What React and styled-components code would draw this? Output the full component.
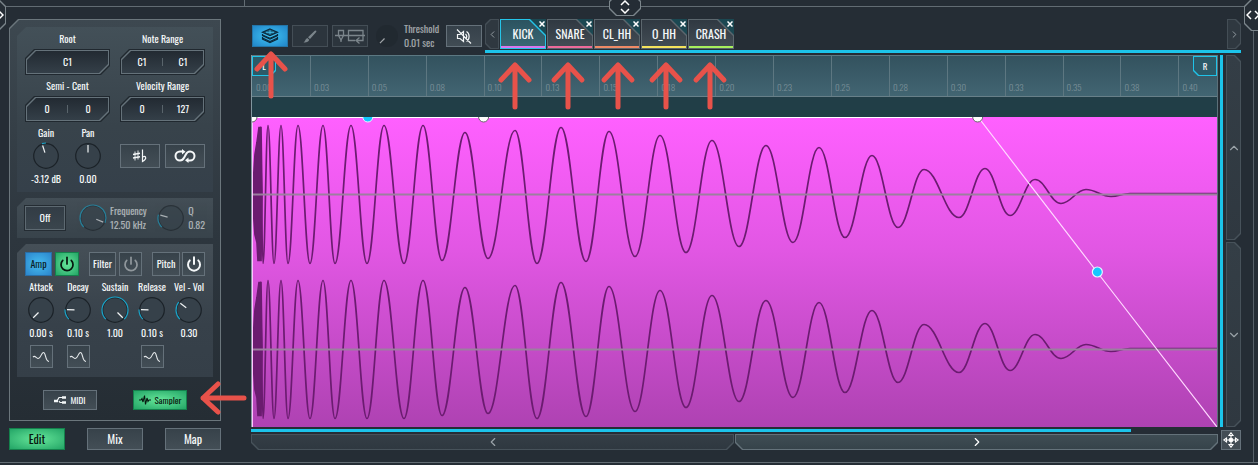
import React, { useState } from "react";
import styled, { createGlobalStyle, css } from "styled-components";
import { Power, ChevronLeft, ChevronRight, ChevronUp, ChevronDown } from "lucide-react";

const GlobalStyle = createGlobalStyle`
  * {
    box-sizing: border-box;
  }

  body {
    margin: 0;
    background: #252d35;
    color: #f4f7f8;
    font-family: Oswald, "Liberation Sans Narrow", "Roboto Condensed", "Open Sans Condensed", "Liberation Sans", sans-serif;
    font-size: 10px;
    font-weight: 400;
    line-height: 14px;
  }

  button, input {
    font: inherit;
    color: inherit;
    margin: 0;
    padding: 0;
    border: 0;
    background: none;
  }

  svg {
    display: block;
    flex: none;
  }
`;

// corner sizes: top-left, top-right, bottom-right, bottom-left
const cut = ([tl, tr, br, bl]) => `polygon(
  ${tl}px 0, calc(100% - ${tr}px) 0, 100% ${tr}px,
  100% calc(100% - ${br}px), calc(100% - ${br}px) 100%,
  ${bl}px 100%, 0 calc(100% - ${bl}px), 0 ${tl}px
)`;

const chamfer = (corners, line, fill) => css`
  position: relative;
  isolation: isolate;
  background: ${line};
  clip-path: ${cut(corners)};

  &::before {
    content: "";
    position: absolute;
    inset: 1px;
    z-index: -1;
    background: ${fill};
    clip-path: ${cut(corners)};
  }
`;

/* ---------- page frame ---------- */

const Page = styled.div`
  position: relative;
  min-height: 100vh;
  display: flex;
  flex-direction: column;
  overflow: hidden;
`;

const TopEdge = styled.div`
  height: 7px;
  padding-left: 244px;
  border-bottom: 1px solid #626c73;

  &::before {
    content: "";
    display: block;
    width: 1px;
    height: 6px;
    background: #626c73;
  }
`;

const BottomEdge = styled.div`
  height: 3px;
  border-top: 1px solid #626c73;
`;

const Workspace = styled.div`
  flex: 1;
  display: flex;
  gap: 30px;
  padding: 12px 17px 12px 9px;
`;

const RightEdge = styled.div`
  position: absolute;
  right: 4px;
  top: 30px;
  bottom: 3px;
  width: 1px;
  background: #566068;
`;

const Handle = styled.button`
  ${(p) => chamfer(p.$corners, "#7b858b", "#252d35")}
  position: absolute;
  display: grid;
  place-items: center;
  width: ${(p) => p.$w}px;
  height: ${(p) => p.$h}px;
  ${(p) => p.$place}
`;

/* ---------- side panel ---------- */

const Side = styled.aside`
  flex: none;
  width: 212px;
  display: flex;
  flex-direction: column;
  gap: 7px;
`;

const Panel = styled.div`
  ${chamfer([9, 0, 0, 0], "#6b767c", "linear-gradient(#3d4850, #2d363e 55%, #252d34)")}
  flex: 1;
  display: flex;
  flex-direction: column;
  gap: 6px;
  padding: 8px;
`;

const Group = styled.section`
  display: flex;
  flex-direction: column;
  padding: ${(p) => p.$pad};
  background: ${(p) => p.$bg};
  clip-path: ${cut([9, 0, 0, 0])};
`;

const TwoCols = styled.div`
  display: grid;
  grid-template-columns: 85px 85px;
  column-gap: 10px;
  row-gap: 4px;
`;

const FieldSet = styled.div`
  display: flex;
  flex-direction: column;
  align-items: center;
  gap: 3px;
`;

const FieldBox = styled.div`
  ${chamfer([9, 0, 9, 0], "#20282f", "#65727a")}
  width: 100%;
  height: 26px;
  display: flex;
  align-items: center;
  padding: 0 2px;

  &::after {
    content: "";
    position: absolute;
    inset: 2px;
    z-index: -1;
    background: linear-gradient(#222a32, #343f48);
    clip-path: ${cut([9, 0, 9, 0])};
  }
`;

const FieldInput = styled.input`
  flex: 1;
  min-width: 0;
  text-align: center;
`;

const Divider = styled.span`
  width: 1px;
  height: 8px;
  background: #59646b;
`;

const Row = styled.div`
  display: flex;
  align-items: center;
  justify-content: ${(p) => p.$justify || "flex-start"};
  gap: ${(p) => p.$gap || 0}px;
  padding: 0 ${(p) => p.$inset || 0}px;
`;

const KnobWrap = styled.label`
  position: relative;
  display: flex;
  flex-direction: column;
  align-items: center;
  gap: 1px;
  width: ${(p) => p.$w}px;
  white-space: nowrap;
`;

const KnobInput = styled.input`
  position: absolute;
  inset: 0;
  width: 100%;
  height: 100%;
  opacity: 0;
  cursor: pointer;
`;

const SideKnob = styled.label`
  position: relative;
  display: flex;
  align-items: center;
  gap: 2px;
  opacity: 0.6;
  white-space: nowrap;
`;

const Lines = styled.span`
  display: flex;
  flex-direction: column;
`;

const tones = {
  plain: css`
    background: linear-gradient(#37424a, #434e56);
    border-color: #65717a;
  `,
  sunk: css`
    background: linear-gradient(#323c45, #3a454d);
    border-color: #5d6971;
    box-shadow: 0 0 0 1px #242c33;
  `,
  blue: css`
    background: radial-gradient(#45bdf0, #2c86cc);
    border-color: #2a6ea6;
    color: #0b1c28;
  `,
  green: css`
    background: radial-gradient(#66e69a, #23a566);
    border-color: #14814c;
    color: #07170f;
  `,
};

const Button = styled.button`
  display: flex;
  align-items: center;
  justify-content: center;
  gap: 4px;
  width: ${(p) => p.$w}px;
  height: ${(p) => p.$h || 24}px;
  border: 1px solid;
  cursor: pointer;
  font-size: ${(p) => p.$size || 10}px;
  ${(p) => tones[p.$tone || "plain"]}

  svg {
    opacity: ${(p) => (p.$dim ? 0.45 : 1)};
  }
`;

const Envelope = styled.div`
  display: grid;
  grid-template-columns: repeat(5, 37px);
  justify-content: center;
  justify-items: center;
  row-gap: 5px;
  padding-top: 4px;
`;

const ModeRow = styled.div`
  display: flex;
  justify-content: space-between;
  padding: 7px 26px 0;
`;

/* ---------- editor ---------- */

const Main = styled.main`
  flex: 1;
  min-width: 0;
  display: flex;
  flex-direction: column;
  gap: 2px;
`;

const Toolbar = styled.div`
  display: flex;
  align-items: flex-start;
`;

const Tools = styled.div`
  display: flex;
  align-items: center;
  gap: 4px;
  width: 234px;
  padding: 2px 3px 0 1px;

  & > :last-child {
    margin-left: auto;
  }
`;

const ToolButton = styled.button`
  flex: none;
  display: grid;
  place-items: center;
  width: 36px;
  height: 22px;
  border: 1px solid ${(p) => (p.$state === "on" ? "#2476a8" : p.$state === "off" ? "#444e56" : "#65717a")};
  background: ${(p) =>
    p.$state === "on"
      ? "radial-gradient(#40c4f4, #2185c8)"
      : p.$state === "off"
      ? "#2c353d"
      : "linear-gradient(#36414a, #414c54)"};
  color: ${(p) => (p.$state === "on" ? "#0c2a3c" : p.$state === "off" ? "#7b858b" : "#f2f5f6")};
  cursor: pointer;
`;

const Spacer = styled.span`
  flex: 1;
`;

const TabArea = styled.div`
  flex: 1;
  min-width: 0;
  display: flex;
  flex-direction: column;
  gap: 1px;
`;

const TabRow = styled.div`
  display: flex;
  gap: 1px;
`;

const TabScroll = styled.button`
  ${(p) => chamfer(p.$corners, "#444e56", "#2f3840")}
  display: grid;
  place-items: center;
  width: 14px;
  height: 30px;
  color: #9aa3a8;
`;

const Tab = styled.div`
  position: relative;
  width: 46px;
  height: 30px;
  background: #1b4852;
`;

const TabBody = styled.button`
  ${(p) =>
    p.$active
      ? chamfer([0, 16, 0, 0], "#25c4e8", "linear-gradient(#2b5360, #3b6875)")
      : chamfer([0, 16, 0, 0], "#5c676e", "linear-gradient(#303942, #434d55)")}
  width: 100%;
  height: 100%;
  font-size: 12px;
  cursor: pointer;

  &::after {
    content: "";
    position: absolute;
    left: 1px;
    right: 1px;
    bottom: 1px;
    height: 2px;
    background: ${(p) => p.$color};
  }
`;

const TabClose = styled.button`
  position: absolute;
  top: 0;
  right: 0;
  width: 9px;
  height: 9px;
  display: grid;
  place-items: center;
`;

const CyanLine = styled.div`
  height: 3px;
  width: ${(p) => p.$w || "100%"};
  background: #1cc4ea;
`;

const EditorRow = styled.div`
  flex: 1;
  display: flex;
`;

const Editor = styled.div`
  flex: 1;
  min-width: 0;
  display: flex;
  flex-direction: column;
  border-left: 1px solid #82969e;
  border-right: 1px solid #5c7079;
`;

const Ruler = styled.div`
  position: relative;
  display: grid;
  grid-template-columns: repeat(16, 3fr) 2fr;
  height: 42px;
  border-top: 1px solid #5c7882;
  border-bottom: 1px solid #688089;
  background: linear-gradient(#33525e, #426572);
`;

const Tick = styled.div`
  display: flex;
  align-items: flex-end;
  padding: 0 0 2px 3px;
  font-size: 9px;
  font-weight: 300;
  color: #7b9099;
  border-left: 1px solid #5d7781;

  &:first-child {
    border-left-color: transparent;
  }
`;

const Marker = styled.button`
  ${(p) => chamfer(p.$corners, "#1fc3e8", "#2c5a68")}
  position: absolute;
  top: 0;
  ${(p) => p.$side}: 0;
  width: 24px;
  height: 20px;
  font-size: 9px;
`;

const Lane = styled.div`
  height: 20px;
  background: #213e47;
`;

const WaveBox = styled.div`
  flex: 1;
  position: relative;
  overflow: hidden;
  background: linear-gradient(#ff60ff, #e257e4 42%, #ae42b2);
`;

const WaveSvg = styled.svg`
  position: absolute;
  inset: 0;
  width: 100%;
  height: 100%;
  overflow: visible;
`;

const ScrollColumn = styled.div`
  display: flex;
  flex-direction: column;
  gap: 2px;
  width: 15px;
`;

const ScrollButton = styled.button`
  ${(p) =>
    p.$bright
      ? chamfer(p.$corners, "#64727a", "linear-gradient(#3f4d54, #36434a)")
      : chamfer(p.$corners, "#47525a", "linear-gradient(#343e46, #2f3840)")}
  flex: 1;
  display: grid;
  place-items: center;
  color: ${(p) => (p.$bright ? "#fff" : "#9aa3a8")};
`;

const ZoomBar = styled.div`
  width: 3px;
  margin: 0 3px 0 2px;
  background: #1cc4ea;
`;

const BottomRow = styled.div`
  display: flex;
  align-items: flex-end;
  gap: 3px;
`;

const HScroll = styled.div`
  flex: 1;
  display: flex;
  flex-direction: column;
  gap: 2px;
`;

const HScrollTrack = styled.div`
  display: flex;
  gap: 1px;
  height: 16px;
`;

const MoveButton = styled.button`
  display: grid;
  place-items: center;
  width: 20px;
  height: 20px;
  border: 1px solid #65717a;
  background: #434d55;
`;

const Notes = styled.svg`
  position: absolute;
  left: 0;
  top: 0;
  width: 100%;
  height: 100%;
  pointer-events: none;
`;

/* ---------- small drawings ---------- */

const point = (deg, r) => {
  const a = (deg * Math.PI) / 180;
  return [15 + r * Math.sin(a), 15 - r * Math.cos(a)];
};

const Dial = ({ angle, from = -135, flat }) => {
  const [x1, y1] = point(angle, 3.5);
  const [x2, y2] = point(angle, flat ? 10 : 11);
  const [lo, hi] = from < angle ? [from, angle] : [angle, from];
  const [sx, sy] = point(lo, 13);
  const [ex, ey] = point(hi, 13);
  return (
    <svg width="30" height="30" viewBox="0 0 30 30" aria-hidden="true">
      <circle cx="15" cy="15" r={flat ? 11 : 12.3} fill={flat ? "#20272e" : "#36414a"} stroke={flat ? "none" : "#1b2228"} strokeWidth="1.2" />
      {hi > lo && (
        <path d={`M${sx} ${sy}A13 13 0 ${hi - lo > 180 ? 1 : 0} 1 ${ex} ${ey}`} fill="none" stroke="#1aa3c8" strokeWidth="1.2" />
      )}
      <path d={`M${x1} ${y1}L${x2} ${y2}`} stroke="#f2f5f6" strokeWidth="1.2" />
    </svg>
  );
};

const CurveIcon = () => (
  <svg width="18" height="12" viewBox="0 0 18 12" fill="none" stroke="#e6eaec" strokeWidth="1.1">
    <path d="M1 6C3 4 4 7 6 7.500C9 8 9 1.500 11.500 1.500C14 1.500 13 10.500 17 10.500" />
  </svg>
);

const SharpFlatIcon = () => (
  <svg width="16" height="14" viewBox="0 0 16 14" fill="none" stroke="currentColor">
    <path d="M3 2.500V11.500M6 1.500V10.500" strokeWidth="0.9" />
    <path d="M1 5.500L8 4.300M1 9L8 7.800" strokeWidth="1.4" />
    <path d="M10.500 0.500V12.500C12.500 11.300 14.500 9.500 13.500 8C12.500 6.800 11 7.700 10.500 8.600" strokeWidth="1.2" />
  </svg>
);

const LoopIcon = () => (
  <svg width="22" height="14" viewBox="0 0 22 14" fill="none" stroke="currentColor" strokeWidth="2">
    <path d="M9 2.500H6A4.500 4.500 0 0 0 6 11.500C9.500 11.500 9.500 9.500 11 7S12.500 2.500 16 2.500A4.500 4.500 0 0 1 16 11.500H14" />
    <path d="M8 0L11.500 2.800L8 5.500ZM14.500 8.500V14L11 11.300Z" fill="currentColor" stroke="none" />
  </svg>
);

const MidiIcon = () => (
  <svg width="12" height="8" viewBox="0 0 12 8" fill="none" stroke="currentColor">
    <path d="M0 5H4M8 1.500H12M8 6.500H12" strokeWidth="2.4" />
    <path d="M3 5L5 1.500H9M5 5L6 6.500H9" strokeWidth="1.2" />
  </svg>
);

const SamplerIcon = () => (
  <svg width="12" height="10" viewBox="0 0 12 10" fill="none" stroke="currentColor" strokeWidth="1.1">
    <path d="M0 5H2L3 3.500L4 7L5.500 0.500L6.500 9.500L8 3L9 6.500L10 5H12" />
  </svg>
);

const LayersIcon = () => (
  <svg width="18" height="16" viewBox="0 0 18 16" fill="none" stroke="currentColor" strokeWidth="1.2">
    <path d="M9 1L16.500 4.300L9 7.600L1.500 4.300Z" fill="#1a5f80" />
    <path d="M9 2.300V6.300M5 4.300H13" stroke="#45c4ee" strokeWidth="0.9" />
    <path d="M1.500 6V7.600L9 11L16.500 7.600V6M1.500 9V11L9 14.600L16.500 11V9" />
    <path d="M1.500 7L9 10.200L16.500 7M1.500 10L9 13.500L16.500 10" />
  </svg>
);

const BrushIcon = () => (
  <svg width="14" height="13" viewBox="0 0 14 13" fill="currentColor">
    <path d="M12.500 0.500C13.500 0.500 13.700 1.300 13 2.200L7 9L5 7.200L11.500 1ZM4.300 8L6.200 9.800C5.800 12 3 12.800 0.500 12.400C2.400 11.500 2 9 4.300 8Z" />
  </svg>
);

const RouteIcon = () => (
  <svg width="30" height="15" viewBox="0 0 30 15" fill="none" stroke="currentColor" strokeWidth="1.3">
    <path d="M0 6.500H30M3.500 1.500H8.500V6.500L6 11L3.500 6.500ZM20 11.500H13.500V1.500H28V11.500H22M24.500 8.500L21 11.500L24.500 14.500" />
    <path d="M6 10V13" />
  </svg>
);

const MutedIcon = () => (
  <svg width="16" height="15" viewBox="0 0 16 15" fill="none" stroke="currentColor" strokeWidth="1.2">
    <path d="M1.500 5.500H4L7.500 2.500V12.500L4 9.500H1.500ZM9.500 5C11 6.500 11 8.500 9.500 10M10.500 2.500C14 4.500 14 10.500 10.500 12.500M1 0.500L15 14.500" />
  </svg>
);

const MoveIcon = () => (
  <svg width="16" height="16" viewBox="0 0 16 16" fill="none" stroke="#fff" strokeWidth="1.1">
    <circle cx="8" cy="8" r="1.800" fill="#fff" />
    <path d="M8 3.500V12.500M3.500 8H12.500" />
    <path d="M8 0.800L10 3.500H6ZM8 15.200L10 12.500H6ZM0.800 8L3.500 6V10ZM15.200 8L12.500 6V10Z" fill="#434d55" />
  </svg>
);

const CrossIcon = () => (
  <svg width="6" height="6" viewBox="0 0 6 6" stroke="#fff" strokeWidth="1.5">
    <path d="M0.500 0.500L5.500 5.500M5.500 0.500L0.500 5.500" />
  </svg>
);

/* ---------- pieces ---------- */

const Field = ({ label, values }) => (
  <FieldSet role="group" aria-label={label}>
    <label htmlFor={label}>{label}</label>
    <FieldBox>
      {values.map((v, i) => (
        <React.Fragment key={i}>
          {i > 0 && <Divider />}
          <FieldInput id={i === 0 ? label : undefined} aria-label={`${label} ${i + 1}`} defaultValue={v} />
        </React.Fragment>
      ))}
    </FieldBox>
  </FieldSet>
);

const Knob = ({ label, value, angle, from, w }) => (
  <KnobWrap $w={w}>
    {label}
    <Dial angle={angle} from={from} />
    {value}
    <KnobInput type="range" min="-135" max="135" defaultValue={angle} aria-label={label} />
  </KnobWrap>
);

const WideKnob = ({ label, value, angle, flat }) => (
  <SideKnob>
    <Dial angle={angle} flat={flat} />
    <Lines>
      <span>{label}</span>
      <span>{value}</span>
    </Lines>
    <KnobInput type="range" min="-135" max="135" defaultValue={angle} aria-label={label} />
  </SideKnob>
);

// [x, y] of every crest and trough, y counted from the centre line
const extrema = [
  [8, -68], [11, 69], [16, -69], [22, 69], [29, -69], [36, 69], [46, -69], [58, 69],
  [71, -69], [83, 69], [99, -69], [115, 69], [132, -69], [152, 69], [171, -69],
  [190, 66], [213, -62], [236, 64], [263, -64], [285, 69], [309, -67], [334, 67],
  [357, -63], [383, 62], [408, -59], [434, 58], [460, -54], [487, 52], [514, -49],
  [541, 48], [567, -47], [593, 43], [620, -39], [646, 33], [672, -25], [707, 23],
  [733, -26], [758, 21], [783, -15], [809, 9], [834, -5], [859, 2], [878, -1], [965, -1],
];

const wavePath = (mid) =>
  extrema.reduce((d, [x, y], i) => {
    if (i === 0) return `M${x} ${mid + y}`;
    const px = extrema[i - 1][0];
    const py = extrema[i - 1][1];
    const k = (x - px) * 0.4;
    return `${d}C${px + k} ${mid + py} ${x - k} ${mid + y} ${x} ${mid + y}`;
  }, "");

// the attack is too dense to show single cycles, so it is a solid shape
const attackPath = (m) =>
  `M1 ${m - 8}L3 ${m - 40}L5 ${m - 52}L7 ${m - 67}H9L10 ${m}L9 ${m + 66}H6L5 ${m + 48}L3 ${m + 40}L1 ${m + 12}Z`;

const Wave = () => (
  <WaveBox>
    <WaveSvg viewBox="0 0 965 310" preserveAspectRatio="none">
      {[77.5, 232.5].map((mid) => (
        <g key={mid} stroke="#6b1c70" strokeWidth="1.7">
          <path d={attackPath(mid)} fill="#6b1c70" />
          <path d={wavePath(mid)} fill="none" />
        </g>
      ))}
      <path d="M0 77.500H965M0 232.500H965" stroke="#9c7f9f" strokeWidth="2" />
      <path d="M0 0.500H726" stroke="#fff" />
      <path d="M726 0L845 155L965 310" fill="none" stroke="#ffd9ff" strokeWidth="1.2" />
      <path d="M0.500 0V310" stroke="#ffc4ff" />
    </WaveSvg>
    <WaveSvg>
      <circle cx="0" cy="0" r="5" fill="#fff" stroke="#6b6b6b" />
      <circle cx="12%" cy="0" r="5" fill="#14c8ff" stroke="#e6f5ff" />
      <circle cx="24%" cy="0" r="5" fill="#fff" stroke="#6b6b6b" />
      <circle cx="75.200%" cy="0" r="5" fill="#fff" stroke="#6b6b6b" />
      <circle cx="87.600%" cy="50%" r="5" fill="#14c8ff" stroke="#e6f5ff" strokeWidth="1.2" />
    </WaveSvg>
  </WaveBox>
);

const times = [
  "0.00", "0.03", "0.05", "0.08", "0.10", "0.13", "0.15", "0.18", "0.20",
  "0.23", "0.25", "0.28", "0.30", "0.33", "0.35", "0.38", "0.40",
];

const samples = [
  { name: "KICK", color: "#d877ee" },
  { name: "SNARE", color: "#ee6a9a" },
  { name: "CL_HH", color: "#f08a66" },
  { name: "O_HH", color: "#f5e35c" },
  { name: "CRASH", color: "#a8f05c" },
];

// tip of each arrow
const arrows = [[271, 54], [515, 65], [568, 65], [618, 65], [666, 65], [710, 65]];

const App = () => {
  const [active, setActive] = useState("KICK");

  return (
    <>
      <GlobalStyle />
      <Page>
        <TopEdge />
        <Workspace>
          <Side>
            <Panel>
              <Group $bg="linear-gradient(#435058, #38434b 60%, #35404a)" $pad="5px 8px 6px">
                <TwoCols>
                  <Field label="Root" values={["C1"]} />
                  <Field label="Note Range" values={["C1", "C1"]} />
                  <Field label="Semi - Cent" values={["0", "0"]} />
                  <Field label="Velocity Range" values={["0", "127"]} />
                  <Row>
                    <Knob label="Gain" value="-3.12 dB" angle={-18} from={0} w={42} />
                    <Knob label="Pan" value="0.00" angle={0} from={0} w={42} />
                  </Row>
                  <Row $gap={5}>
                    <Button $w={40} aria-label="Accidentals"><SharpFlatIcon /></Button>
                    <Button $w={40} aria-label="Loop"><LoopIcon /></Button>
                  </Row>
                </TwoCols>
              </Group>

              <Group $bg="linear-gradient(#434e56, #38434b)" $pad="5px 8px">
                <Row $justify="space-between">
                  <Row $gap={13}>
                    <Button $w={40} $tone="sunk">Off</Button>
                    <WideKnob label="Frequency" value="12.50 kHz" angle={112} />
                  </Row>
                  <WideKnob label="Q" value="0.82" angle={-75} />
                </Row>
              </Group>

              <Group $bg="linear-gradient(#454f57, #37414a 60%, #353f48)" $pad="8px 5px 9px">
                <Row $justify="space-between" $inset={3}>
                  <Row $gap={3}>
                    <Button $w={27} $tone="blue">Amp</Button>
                    <Button $w={24} $tone="green" aria-label="Amp power"><Power size={16} strokeWidth={2.6} /></Button>
                  </Row>
                  <Row $gap={3}>
                    <Button $w={27}>Filter</Button>
                    <Button $w={23} $dim aria-label="Filter power"><Power size={16} strokeWidth={2.6} /></Button>
                  </Row>
                  <Row $gap={2}>
                    <Button $w={28}>Pitch</Button>
                    <Button $w={23} aria-label="Pitch power"><Power size={16} strokeWidth={3} /></Button>
                  </Row>
                </Row>
                <Envelope>
                  <Knob label="Attack" value="0.00 s" angle={-135} w={37} />
                  <Knob label="Decay" value="0.10 s" angle={-88} w={37} />
                  <Knob label="Sustain" value="1.00" angle={135} w={37} />
                  <Knob label="Release" value="0.10 s" angle={-88} w={37} />
                  <Knob label="Vel - Vol" value="0.30" angle={-52} w={37} />
                  <Button $w={23} $h={23} aria-label="Attack curve"><CurveIcon /></Button>
                  <Button $w={23} $h={23} aria-label="Decay curve"><CurveIcon /></Button>
                  <span />
                  <Button $w={23} $h={23} aria-label="Release curve"><CurveIcon /></Button>
                </Envelope>
              </Group>

              <ModeRow>
                <Button $w={54} $h={20} $size={9}><MidiIcon />MIDI</Button>
                <Button $w={54} $h={20} $size={9} $tone="green"><SamplerIcon />Sampler</Button>
              </ModeRow>
            </Panel>
            <Row $justify="space-between">
              <Button $w={56} $h={22} $size={12} $tone="green">Edit</Button>
              <Button $w={56} $h={22} $size={12}>Mix</Button>
              <Button $w={56} $h={22} $size={12}>Map</Button>
            </Row>
          </Side>

          <Main>
            <Toolbar>
              <Tools>
                <ToolButton $state="on" aria-label="Layers"><LayersIcon /></ToolButton>
                <ToolButton $state="off" aria-label="Draw"><BrushIcon /></ToolButton>
                <ToolButton $state="off" aria-label="Slice routing"><RouteIcon /></ToolButton>
                <WideKnob label="Threshold" value="0.01 sec" angle={-135} flat />
                <ToolButton aria-label="Mute"><MutedIcon /></ToolButton>
              </Tools>
              <TabArea>
                <TabRow>
                  <TabScroll $corners={[5, 0, 0, 5]} aria-label="Previous samples"><ChevronLeft size={11} /></TabScroll>
                  {samples.map((s) => (
                    <Tab key={s.name}>
                      <TabBody $active={s.name === active} $color={s.color} onClick={() => setActive(s.name)}>
                        {s.name}
                      </TabBody>
                      <TabClose aria-label={`Close ${s.name}`}><CrossIcon /></TabClose>
                    </Tab>
                  ))}
                  <Spacer />
                  <TabScroll $corners={[0, 5, 5, 0]} aria-label="Next samples"><ChevronRight size={11} /></TabScroll>
                </TabRow>
                <CyanLine />
              </TabArea>
            </Toolbar>

            <EditorRow>
              <Editor>
                <Ruler>
                  {times.map((t) => (
                    <Tick key={t}>{t}</Tick>
                  ))}
                  <Marker $side="left" $corners={[0, 0, 5, 0]}>L</Marker>
                  <Marker $side="right" $corners={[0, 0, 0, 5]}>R</Marker>
                </Ruler>
                <Lane />
                <Wave />
              </Editor>
              <ZoomBar />
              <ScrollColumn>
                <ScrollButton $corners={[0, 6, 6, 0]} aria-label="Scroll up"><ChevronUp size={14} /></ScrollButton>
                <ScrollButton $corners={[0, 6, 6, 0]} aria-label="Scroll down"><ChevronDown size={14} /></ScrollButton>
              </ScrollColumn>
            </EditorRow>

            <BottomRow>
              <HScroll>
                <CyanLine $w="91%" />
                <HScrollTrack>
                  <ScrollButton $corners={[0, 0, 7, 7]} aria-label="Scroll left"><ChevronLeft size={14} /></ScrollButton>
                  <ScrollButton $bright $corners={[0, 0, 7, 7]} aria-label="Scroll right"><ChevronRight size={14} /></ScrollButton>
                </HScrollTrack>
              </HScroll>
              <MoveButton aria-label="Move"><MoveIcon /></MoveButton>
            </BottomRow>
          </Main>
        </Workspace>
        <BottomEdge />
        <RightEdge />

        <Handle $w={32} $h={22} $corners={[7, 7, 7, 7]} $place="left: calc(50% - 20px); top: -6px;" aria-label="Resize top">
          <svg width="10" height="18" viewBox="0 0 10 18" fill="none" stroke="#fff" strokeWidth="1.5">
            <path d="M1 9L5 5L9 9M1 13L5 17L9 13" />
          </svg>
        </Handle>
        <Handle $w={22} $h={32} $corners={[7, 7, 7, 7]} $place="left: -16px; top: -1px;" aria-label="Resize left">
          <svg width="18" height="10" viewBox="0 0 18 10" fill="none" stroke="#fff" strokeWidth="1.5">
            <path d="M13 1L17 5L13 9" />
          </svg>
        </Handle>
        <Handle $w={22} $h={32} $corners={[7, 7, 7, 7]} $place="right: -8px; top: -1px;" aria-label="Resize right">
          <svg width="18" height="10" viewBox="0 0 18 10" fill="none" stroke="#fff" strokeWidth="1.5">
            <path d="M5 1L1 5L5 9M9 1L13 5L9 9" />
          </svg>
        </Handle>

        <Notes fill="none" stroke="#e8524a" strokeWidth="5" strokeLinecap="round" strokeLinejoin="round" aria-hidden="true">
          {arrows.map(([x, y]) => (
            <path key={x} d={`M${x} ${y + 42}V${y}M${x - 14} ${y + 15}L${x} ${y}L${x + 14} ${y + 15}`} />
          ))}
          <path d="M244 398H203M218 384L203 398L218 412" />
        </Notes>
      </Page>
    </>
  );
};

export default App;
